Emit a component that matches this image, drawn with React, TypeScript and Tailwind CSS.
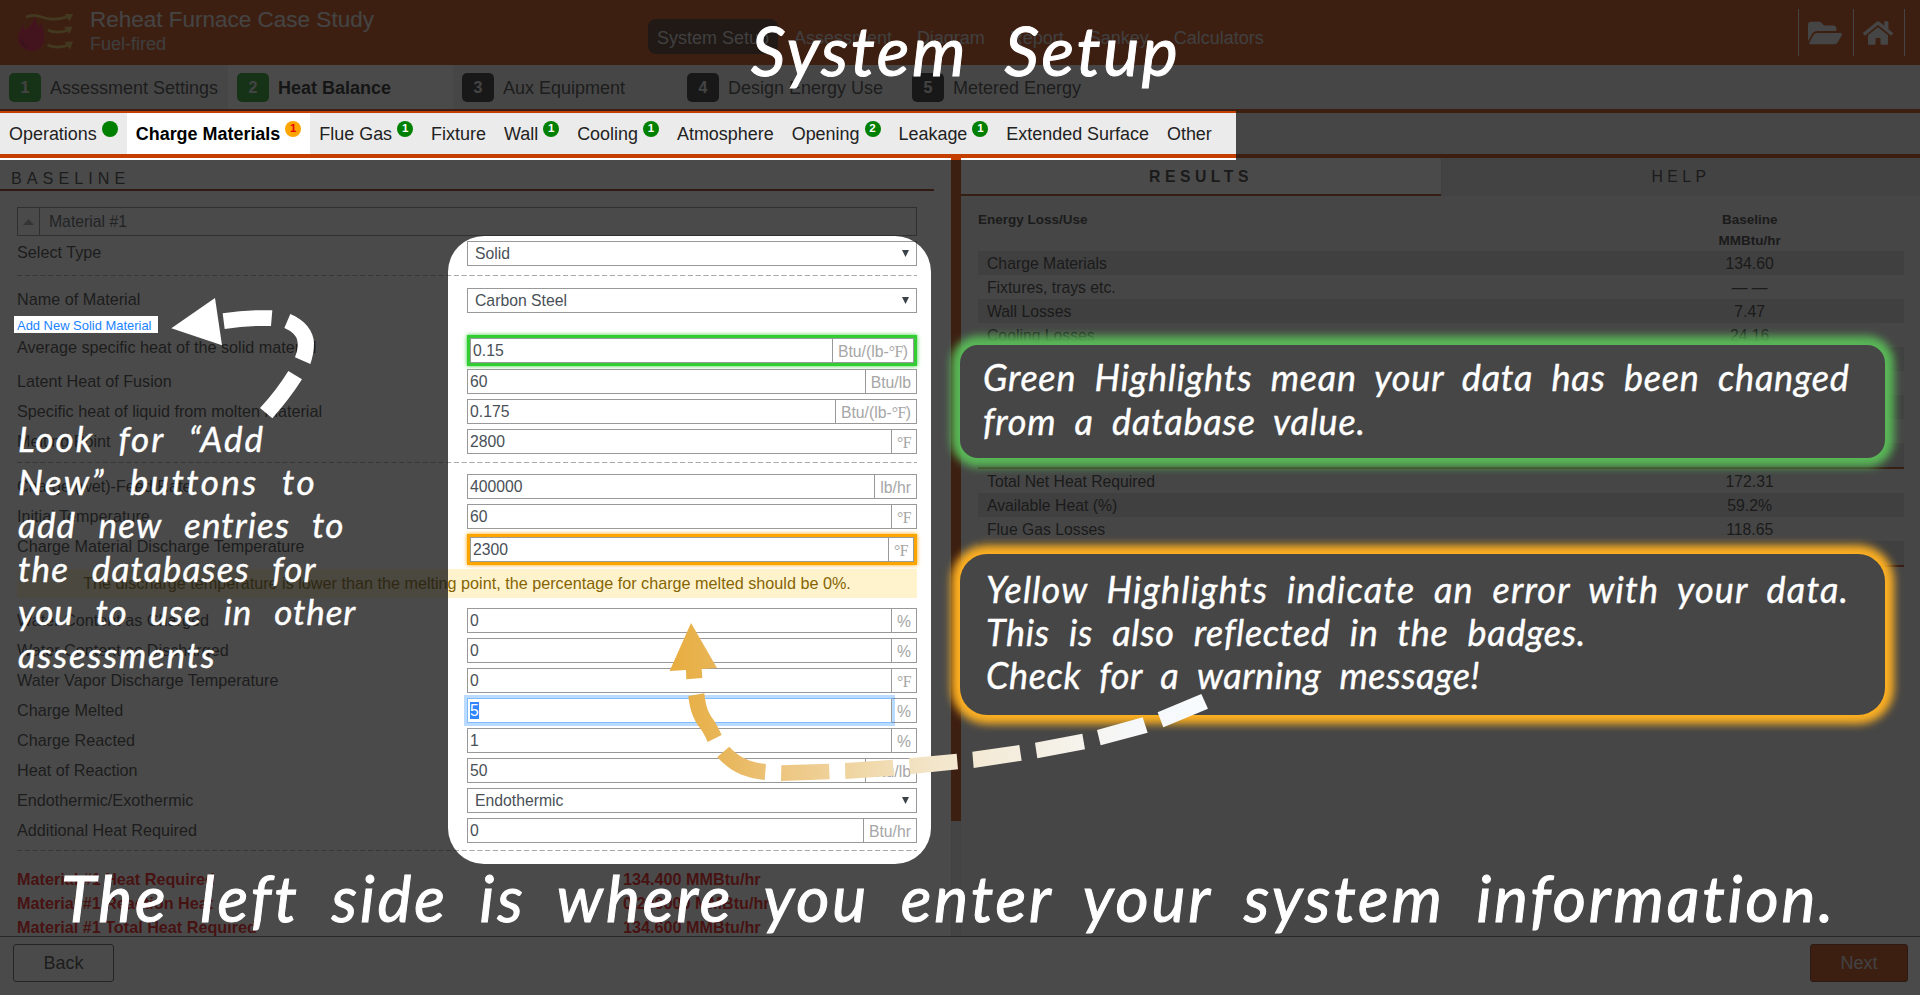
import type { ReactNode } from "react";
import { FaFolderOpen, FaHome } from "react-icons/fa";

type Tone = "green" | "orange" | "none";

function Badge({ tone, children }: { tone: Tone; children?: ReactNode }) {
  return (
    <span
      className={
        "mb-[10px] ml-[5px] flex h-4 w-4 items-center justify-center rounded-full text-[11.5px] leading-none font-bold " +
        (tone === "orange" ? "bg-[#ffa500] text-red-600" : "bg-[#008000] text-white")
      }
    >
      {children}
    </span>
  );
}

const navItems = ["System Setup", "Assessment", "Diagram", "Report", "Sankey", "Calculators"];

function Header() {
  return (
    <header className="flex h-[65px] bg-[#c43e00] text-[#e2e2e2]">
      <svg className="mt-[5px] ml-[10px] h-[60px] w-20" viewBox="0 0 80 60" fill="none">
        <g stroke="#d8b040" strokeWidth="2.800">
          <path d="M16 12c5-2 9-2 14-.5s13 5 27 .5" />
          <path d="M38 25c5 2.500 11 3 19 .5" />
          <path d="M37.500 40c6 2.500 12 3 20 .5" />
        </g>
        <g fill="#d8b040">
          <path d="M54.500 9l8.500 0-3.500 7.500z" />
          <path d="M54 22l8.500-.5-3 7.500z" />
          <path d="M54.500 37l8.500-.5-3 8z" />
        </g>
        <path
          d="M25 10.500c.5 5 2.500 8 3.500 12.500 1-1.500 2-4 2.500-6 1 5 3.500 9.500 3.500 15.500C34.500 41 28.500 46 21.500 46S8 41 8 33c0-5 3.500-8 4.500-13.500 1.500 2 2 4 2.500 6.500 3.500-3 8.500-8 10-15.500z"
          fill="#e0083a"
        />
        <path d="M11 34c1 4 3 6.500 6.500 8.500" stroke="#8c0a28" strokeWidth="1.200" />
      </svg>
      <div className="w-[558px] pt-[6px]">
        <div className="text-[22.5px] leading-[28px]">Reheat Furnace Case Study</div>
        <div className="text-[18px] leading-[20px] text-[#c8c8c8]">Fuel-fired</div>
      </div>
      <nav className="mt-[19px] flex h-[35px] gap-[7px] text-[18px] text-[#cfcfcf]">
        {navItems.map((n, i) => (
          <span
            key={n}
            className={
              "flex items-center rounded-lg px-[9px] pt-[3px] tracking-[-0.010px] " +
              (i === 0 ? "bg-[#40200f]" : "")
            }
          >
            {n}
          </span>
        ))}
      </nav>
      <div className="mt-[9px] mr-[15px] ml-auto flex h-[47px] text-[#e8e8e8]">
        <span className="flex w-[55px] items-center border-l border-[#e8e8e8] pl-[9px]">
          <FaFolderOpen className="h-[34px] w-[34px]" />
        </span>
        <span className="flex w-[52px] items-center border-x border-[#e8e8e8] pl-[9px]">
          <FaHome className="h-[30px] w-[30px]" />
        </span>
      </div>
    </header>
  );
}

const steps = [
  { label: "Assessment Settings", done: true },
  { label: "Heat Balance", done: true, active: true },
  { label: "Aux Equipment" },
  { label: "Design Energy Use" },
  { label: "Metered Energy" },
];

function StepBar() {
  return (
    <div className="flex h-[48px] border-b-4 border-[#c43e00] bg-[#ececec] text-[18px] text-[#333]">
      {steps.map((s, i) => (
        <div
          key={s.label}
          className={
            "flex items-center pl-[9px] " +
            (i === 0 ? "w-[228px] " : "w-[225px] ") +
            (s.active ? "bg-white font-bold text-[#111]" : "")
          }
        >
          <span
            className={
              "mt-px mr-[9px] flex h-[29px] w-8 items-center justify-center rounded-[5px] text-[16px] font-bold text-[#e0e0e0] " +
              (s.done ? "bg-[#1a961a]" : "bg-[#1e1e1e]")
            }
          >
            {i + 1}
          </span>
          <span className="pt-[2px]">{s.label}</span>
        </div>
      ))}
    </div>
  );
}

const tabs: { label: string; badge?: string; tone?: Tone; active?: boolean }[] = [
  { label: "Operations", badge: "", tone: "green" },
  { label: "Charge Materials", badge: "1", tone: "orange", active: true },
  { label: "Flue Gas", badge: "1", tone: "green" },
  { label: "Fixture" },
  { label: "Wall", badge: "1", tone: "green" },
  { label: "Cooling", badge: "1", tone: "green" },
  { label: "Atmosphere" },
  { label: "Opening", badge: "2", tone: "green" },
  { label: "Leakage", badge: "1", tone: "green" },
  { label: "Extended Surface" },
  { label: "Other" },
];

function TabBar() {
  return (
    <div className="flex h-[45px] border-b-4 border-[#c43e00] bg-[#ebebeb] text-[17.96px] text-[#222]">
      {tabs.map((t) => (
        <div
          key={t.label}
          className={
            "flex items-center px-[9px] pt-px " + (t.active ? "bg-white font-bold text-black" : "")
          }
        >
          {t.label}
          {t.tone && <Badge tone={t.tone}>{t.badge}</Badge>}
        </div>
      ))}
    </div>
  );
}

function Unit({ children }: { children: string }) {
  const at = children.indexOf("°F");
  return (
    <span className="flex h-full items-center border-l border-[#999] px-[5px] pt-[2px] text-[15.75px] whitespace-pre text-[#a6a6a6]">
      {at < 0 ? (
        children
      ) : (
        <>
          {children.slice(0, at)}
          <span className="font-['Liberation_Serif',serif] tracking-[-0.500px]">°F</span>
          {children.slice(at + 2)}
        </>
      )}
    </span>
  );
}

type Mark = "green" | "orange" | "focus";

function Field({ value, unit, mark }: { value: string; unit?: string; mark?: Mark }) {
  const box = (
    <div className="flex h-[25px] items-center border border-[#999] bg-white text-[15.75px] text-[#495057]">
      {unit ? (
        <>
          <span
            className={
              "flex h-full grow items-center pl-[2px] " +
              (mark === "focus" ? "shadow-[0_0_0_1px_#80bdff,0_0_0_4px_rgba(0,123,255,0.27)]" : "")
            }
          >
            {mark === "focus" ? <span className="bg-[#2f86ff] leading-[17px] text-white">{value}</span> : value}
          </span>
          <Unit>{unit}</Unit>
        </>
      ) : (
        <>
          <span className="grow pl-[7px]">{value}</span>
          <svg className="mr-[7px] h-[7px] w-[7px]" viewBox="0 0 7 7">
            <path d="M0 0h7L3.500 7z" fill="#3b4248" />
          </svg>
        </>
      )}
    </div>
  );
  if (mark === "green")
    return <div className="border-3 border-[#32cd32] shadow-[0_0_4px_#32cd32]">{box}</div>;
  if (mark === "orange")
    return <div className="border-3 border-[#ffa500] shadow-[0_0_4px_#ffa500]">{box}</div>;
  return box;
}

function Row({ label, value, unit, mark }: { label: string; value: string; unit?: string; mark?: Mark }) {
  const ringed = mark === "green" || mark === "orange";
  const raised = ringed ? "leading-[24px]" : unit || value === "Endothermic" ? "leading-[28px]" : "leading-[26px]";
  return (
    <div className="flex h-[30px]">
      <div className={"h-[30px] w-[450px] text-[16.2px] whitespace-nowrap " + raised}>{label}</div>
      <div className={"w-[450px] " + (ringed ? "" : "pt-[2px]")}>
        <Field value={value} unit={unit} mark={mark} />
      </div>
    </div>
  );
}

function Dashes({ className }: { className: string }) {
  return (
    <svg className={"block h-px w-[900px] " + className}>
      <line x1="0" y1="0.5" x2="900" y2="0.5" stroke="#a8a8a8" strokeWidth="1" strokeDasharray="5.200 2.600" />
    </svg>
  );
}

const totals = [
  ["Material #1 Heat Required", "134.400 MMBtu/hr"],
  ["Material #1 Reaction Heat", "0.200000 MMBtu/hr"],
  ["Material #1 Total Heat Required", "134.600 MMBtu/hr"],
];

function FormPanel() {
  return (
    <section className="flex w-[951px] flex-col overflow-hidden bg-white text-[#333]">
      <h2 className="h-[33px] w-[934px] border-b-2 border-[#8a2c0a] pt-[8px] pl-[11px] text-[16.2px] leading-[24px] tracking-[5px]">
        BASELINE
      </h2>
      <div className="mt-[16px] ml-[17px] w-[900px]">
        <div className="flex h-[29px] items-center border border-[#888] text-[15.75px] text-[#495057]">
          <span className="flex h-full w-[22px] items-center justify-center border-r border-[#888]">
            <svg className="h-[6px] w-[11px]" viewBox="0 0 11 6">
              <path d="M0 6h11L5.500 0z" fill="#999" />
            </svg>
          </span>
          <span className="pl-[9px]">Material #1</span>
        </div>
        <div className="h-[3px]" />
        <Row label="Select Type" value="Solid" />
        <Dashes className="mt-[6px]" />
        <div className="h-[10px]" />
        <Row label="Name of Material" value="Carbon Steel" />
        <div className="h-[19px] text-[12.95px] leading-[19px] text-[#1a83ff]">Add New Solid Material</div>
        <Row label="Average specific heat of the solid material" value="0.15" unit="Btu/(lb-°F)" mark="green" />
        <div className="h-[2px]" />
        <Row label="Latent Heat of Fusion" value="60" unit="Btu/lb" />
        <Row label="Specific heat of liquid from molten material" value="0.175" unit="Btu/(lb-°F)" />
        <Row label="Melting Point" value="2800" unit="°F" />
        <Dashes className="mt-[5px]" />
        <div className="h-[9px]" />
        <Row label="Charge (wet)-Feed Rate" value="400000" unit="lb/hr" />
        <Row label="Initial Temperature" value="60" unit="°F" />
        <div className="h-[2px]" />
        <Row label="Charge Material Discharge Temperature" value="2300" unit="°F" mark="orange" />
        <div className="mt-[5px] mb-[8px] flex h-[29px] items-center justify-center bg-[#fff3cd] text-[16.2px] text-[#856404]">
          The discharge temperature is lower than the melting point, the percentage for charge melted should be 0%.
        </div>
        <Row label="Water Content as Charged" value="0" unit="%" />
        <Row label="Water Content as Discharged" value="0" unit="%" />
        <Row label="Water Vapor Discharge Temperature" value="0" unit="°F" />
        <Row label="Charge Melted" value="5" unit="%" mark="focus" />
        <Row label="Charge Reacted" value="1" unit="%" />
        <Row label="Heat of Reaction" value="50" unit="Btu/lb" />
        <Row label="Endothermic/Exothermic" value="Endothermic" />
        <Row label="Additional Heat Required" value="0" unit="Btu/hr" />
        <Dashes className="mt-[4px]" />
        <div className="mt-[16px] text-[16.2px] leading-[24px] font-bold text-[#f00000]">
          {totals.map(([k, v]) => (
            <div key={k} className="flex h-6">
              <span className="w-[606px]">{k}</span>
              <span>{v}</span>
            </div>
          ))}
        </div>
      </div>
    </section>
  );
}

const results: { label: string; value: string; rule?: boolean }[] = [
  { label: "Charge Materials", value: "134.60" },
  { label: "Fixtures, trays etc.", value: "— —" },
  { label: "Wall Losses", value: "7.47" },
  { label: "Cooling Losses", value: "24.16" },
  { label: "", value: "" },
  { label: "", value: "" },
  { label: "", value: "" },
  { label: "", value: "" },
  { label: "", value: "", rule: true },
  { label: "Total Net Heat Required", value: "172.31" },
  { label: "Available Heat (%)", value: "59.2%" },
  { label: "Flue Gas Losses", value: "118.65" },
  { label: "", value: "", rule: true },
];

function ResultsPanel() {
  return (
    <section className="flex w-[959px] flex-col bg-[#ececec] text-[#2a2a2a]">
      <div className="flex h-[38px] text-center text-[15.75px] leading-[37px] tracking-[4.500px]">
        <div className="w-[480px] border-b-2 border-[#a8380a] bg-white font-bold">RESULTS</div>
        <div className="grow border-l border-[#d0d0d0] bg-[#dfdfdf]">HELP</div>
      </div>
      <div className="mt-[14px] ml-[17px] w-[926px]">
        <div className="grid grid-cols-[2fr_1fr] text-[13.5px] leading-[20.500px] font-bold">
          <span>Energy Loss/Use</span>
          <span className="text-center">
            Baseline
            <br />
            MMBtu/hr
          </span>
        </div>
        {results.map((r, i) => (
          <div
            key={i}
            className={
              "grid grid-cols-[2fr_1fr] text-[15.75px] leading-[25px] " +
              (i % 2 === 0 ? "bg-[#cfcfcf] " : "") +
              (r.rule ? "h-[26px] border-b-2 border-[#a8380a]" : "h-6")
            }
          >
            <span className="pl-[9px]">{r.label}</span>
            <span className="text-center">{r.value}</span>
          </div>
        ))}
      </div>
    </section>
  );
}

function Footer() {
  return (
    <footer className="flex h-[59px] justify-between border-t border-[#666] bg-white pt-[7px] pr-[12px] pl-[13px] text-[18px]">
      <div className="flex h-[38px] w-[101px] items-center justify-center rounded-[3px] border border-[#555] text-[#333]">
        Back
      </div>
      <div className="flex h-[38px] w-[98px] items-center justify-center rounded-[3px] border border-[#7a2600] bg-[#c43e00] text-[#d8d8d8]">
        Next
      </div>
    </footer>
  );
}

function Spotlight() {
  return (
    <svg className="absolute inset-0 h-[995px] w-[1920px]" viewBox="0 0 1920 995">
      <path
        fillRule="evenodd"
        fill="rgb(23,23,23)"
        fillOpacity="0.78"
        d="M0 0H1920V995H0Z M0 111V160H1236V111Z M14 316V333H158V316Z M484 236H895A36 36 0 0 1 931 272V828A36 36 0 0 1 895 864H484A36 36 0 0 1 448 828V272A36 36 0 0 1 484 236Z"
      />
    </svg>
  );
}

function Arrows() {
  return (
    <svg className="absolute inset-0 h-[995px] w-[1920px]" viewBox="0 0 1920 995">
      <defs>
        <linearGradient id="fade" gradientUnits="userSpaceOnUse" x1="689" y1="0" x2="2304" y2="0">
          <stop offset="0" stopColor="#e8ad3e" />
          <stop offset="0.1" stopColor="#e8b65a" />
          <stop offset="0.21" stopColor="#edc681" />
          <stop offset="0.37" stopColor="#f0d9ab" />
          <stop offset="0.5" stopColor="#f3e6cc" />
          <stop offset="0.72" stopColor="#f5f1e7" />
          <stop offset="0.85" stopColor="#f6f7f8" />
          <stop offset="1" stopColor="#f8fcff" />
        </linearGradient>
      </defs>
      <g transform="translate(0 200) scale(0.33333)" fill="#fff">
        <path d="M514 385L645 294L666 436Z" />
        <path d="M668 340Q745 328 817 331L813 378Q745 376 674 387Z" />
        <path d="M871 342C915 360 942 395 942 430C942 455 937 475 931 492L885 472C895 445 895 430 890 415C883 400 870 392 853 384Z" />
        <path d="M865 513L906 538Q870 595 817 655L780 624Q830 570 865 513Z" />
      </g>
      <g transform="translate(440 540) scale(0.33333)" fill="url(#fade)">
        <path d="M753 249L831 384L785 387L787 414L739 418L738 390L689 393Z" />
        <path d="M745 468L793 460C797 500 805 520 823 543Q835 562 845 585L803 606Q790 575 773 555C757 530 748 500 745 468Z" />
        <path d="M868 620C895 650 930 668 978 672L974 720C915 714 870 695 832 651Z" />
        <path d="M1024 676L1167 671L1169 718L1023 723Z" />
        <path d="M1215 669L1358 659L1362 707L1216 717Z" />
        <path d="M1407 655L1550 641L1554 688L1410 703Z" />
        <path d="M1597 635L1738 615L1745 662L1601 684Z" />
        <path d="M1785 608L1927 581L1935 628L1792 655Z" />
        <path d="M1971 570L2108 532L2123 578L1982 616Z" />
        <path d="M2153 517L2284 462L2304 506L2170 562Z" />
      </g>
    </svg>
  );
}

function Annotations() {
  return (
    <div className="absolute inset-0 font-['Lato',sans-serif] whitespace-nowrap text-white italic [-webkit-text-stroke:0.400px_white]">
      <div className="absolute top-[345px] left-[960px] h-[113px] w-[925px] rounded-[18px] bg-[#464646] pt-[10px] pl-[23px] text-[36px] leading-[44px] shadow-[0_0_8px_9px_#59b857]">
        <div className="tracking-[0.800px] [word-spacing:9px]">Green Highlights mean your data has been changed</div>
        <div className="tracking-[0.800px] [word-spacing:9px]">from a database value.</div>
      </div>
      <div className="absolute top-[554px] left-[960px] h-[161px] w-[925px] rounded-[27px] bg-[#464646] pt-[14px] pl-[26px] text-[36px] leading-[43px] shadow-[0_0_8px_9px_#fdb022]">
        <div className="tracking-[1.200px] [word-spacing:9px]">Yellow Highlights indicate an error with your data.</div>
        <div className="tracking-[0.700px] [word-spacing:10px]">This is also reflected in the badges.</div>
        <div className="tracking-[0.600px] [word-spacing:9px]">Check for a warning message!</div>
      </div>
      <div className="absolute top-[417px] left-[18px] text-[35px] leading-[43.200px] [word-spacing:13px]">
        <div className="tracking-[2px] [word-spacing:14px]">Look for “Add</div>
        <div className="tracking-[2.400px]">New” buttons to</div>
        <div className="tracking-[1.100px]">add new entries to</div>
        <div className="tracking-[1.200px]">the databases for</div>
        <div className="tracking-[0.900px]">you to use in other</div>
        <div className="tracking-[1.700px]">assessments</div>
      </div>
      <div className="absolute top-[9px] left-[751px] text-[68px] leading-[82px] tracking-[2.600px] [word-spacing:18px] [-webkit-text-stroke:1px_white]">
        System Setup
      </div>
      <div className="absolute top-[858px] left-[61px] text-[64px] leading-[80px] tracking-[2.850px] [word-spacing:14px] [-webkit-text-stroke:1px_white]">
        The left side is where you enter your system information.
      </div>
    </div>
  );
}

export default function App() {
  return (
    <div className="relative flex h-[995px] w-[1920px] flex-col overflow-hidden bg-white font-['Liberation_Sans',Arial,sans-serif]">
      <Header />
      <StepBar />
      <TabBar />
      <main className="flex h-[778px] overflow-hidden">
        <FormPanel />
        <div className="w-[10px] border-x border-[#d8d8d8] bg-[#e4e4e4]">
          <div className="-mx-px h-[663px] bg-[#c43e00]" />
        </div>
        <ResultsPanel />
      </main>
      <Footer />
      <Spotlight />
      <Annotations />
      <Arrows />
    </div>
  );
}
